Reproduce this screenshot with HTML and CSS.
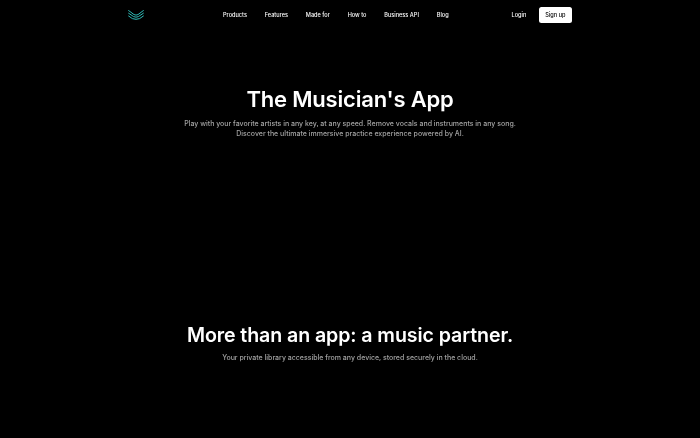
FILE: index.html
```html
<!DOCTYPE html>
<html lang="en">
<head>
<meta charset="utf-8">
<title>The Musician's App</title>
<link rel="stylesheet" href="styles.css">
</head>
<body>
<header class="header">
  <a class="logo" href="#" aria-label="Home">
    <svg width="16" height="10" viewBox="0 0 16 10" fill="none" stroke="#2fbcb8" stroke-width="1">
      <path d="M0.3 0.3 L6 4.6 Q8 5.6 10 4.6 L15.7 0.3"/>
      <path d="M0.3 3 L5.6 6.6 Q8 7.8 10.4 6.6 L15.7 3"/>
      <path d="M0.3 5.8 L4.4 8.6 Q8 10 11.6 8.6 L15.7 5.8"/>
    </svg>
  </a>
  <nav class="nav">
    <a href="#">Products</a>
    <a href="#">Features</a>
    <a href="#">Made for</a>
    <a href="#">How to</a>
    <a href="#">Business API</a>
    <a href="#">Blog</a>
  </nav>
  <div class="actions">
    <a class="login" href="#">Login</a>
    <a class="signup" href="#">Sign up</a>
  </div>
</header>
<main class="main">
  <section class="hero">
    <h1>The Musician's App</h1>
    <p>Play with your favorite artists in any key, at any speed. Remove vocals and instruments in any song.<br>Discover the ultimate immersive practice experience powered by AI.</p>
  </section>
  <section class="partner">
    <h2>More than an app: a music partner.</h2>
    <p>Your private library accessible from any device, stored securely in the cloud.</p>
  </section>
</main>
</body>
</html>
```
FILE: styles.css
```css
* { box-sizing: border-box; }
html, body { margin: 0; height: 100%; overflow: hidden; background: #000; }
body { font-family: Inter, "Liberation Sans", sans-serif; color: #fff; }
a { color: inherit; text-decoration: none; }
.header, .main { filter: blur(0.25px); }
.header { display: flex; align-items: center; width: 444px; height: 29.5px; margin: 0 auto; font-size: 5.6px; font-weight: 500; }
.logo { display: flex; width: 95px; }
.nav { display: flex; gap: 17.8px; }
.actions { display: flex; align-items: center; margin-left: auto; gap: 12.5px; }
.signup { display: flex; align-items: center; height: 15.5px; padding: 0 6.5px; border-radius: 2.5px; background: #fff; color: #000; }
.hero { padding-top: 54.5px; text-align: center; }
h1, h2 { margin: 0; font-weight: 600; line-height: 30px; }
h1 { font-size: 22px; letter-spacing: -0.2px; }
h2 { font-size: 19.6px; letter-spacing: -0.09px; }
.hero p, .partner p { margin: 0; color: #a3a3a3; font-size: 7px; font-weight: 500; line-height: 10px; }
.hero p { margin-top: 5px; }
.partner { padding-top: 181px; text-align: center; }
.partner p { margin-top: 3px; }
```
